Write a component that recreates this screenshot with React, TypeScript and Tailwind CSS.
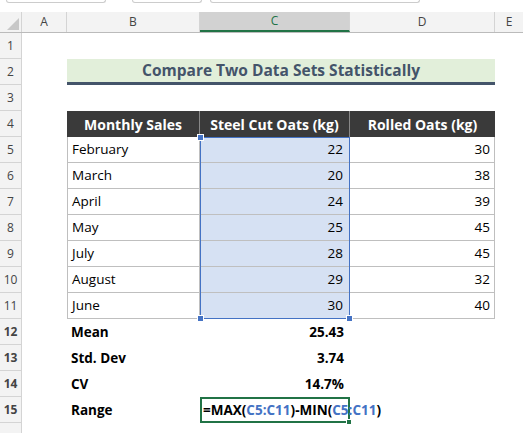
const W = { a: 45 };
const data: [string, number, number][] = [
  ["February", 22, 30],
  ["March", 20, 38],
  ["April", 24, 39],
  ["May", 25, 45],
  ["July", 28, 45],
  ["August", 29, 32],
  ["June", 30, 40],
];
const stats: [string, string][] = [
  ["Mean", "25.43"],
  ["Std. Dev", "3.74"],
  ["CV", "14.7%"],
];

function RowHead({ n }: { n?: number }) {
  return (
    <div className="w-[22px] shrink-0 h-full bg-[#f3f3f3] border-r border-b border-[#d4d4d4] flex items-center justify-center text-[12px] text-[#444]">
      {n}
    </div>
  );
}

export default function App() {
  const rowH = "h-[26px]";
  return (
    <div className="w-[523px] h-[433px] overflow-hidden bg-white text-[13.5px] text-black" style={{ fontFamily: '"Open Sans", sans-serif' }}>
      <div className="h-[12px] flex px-[6px]">
        <div className="w-[100px] h-[3px] border-b border-x border-[#ccc] rounded-b" />
        <div className="w-[70px] h-[3px] border-b border-x border-[#ccc] rounded-b ml-[26px]" />
        <div className="w-[210px] h-[3px] border-b border-x border-[#ccc] rounded-b ml-[8px]" />
      </div>
      <div className="h-[21px] flex bg-[#f3f3f3] border-b border-[#bbb] text-[12px] text-[#444]">
        <div className="w-[22px] border-r border-[#d4d4d4] flex items-end justify-end p-[2px]">
          <div className="w-0 h-0 border-l-[12px] border-l-transparent border-b-[12px] border-b-[#c8c8c8]" />
        </div>
        <div className="w-[45px] border-r border-[#d4d4d4] flex items-center justify-center">A</div>
        <div className="w-[133px] border-r border-[#d4d4d4] flex items-center justify-center">B</div>
        <div className="w-[150px] border-r border-[#d4d4d4] bg-[#d2d2d2] border-b-2 border-b-[#217346] flex items-center justify-center text-[#217346]">C</div>
        <div className="w-[145px] border-r border-[#d4d4d4] flex items-center justify-center">D</div>
        <div className="flex-1 flex items-center justify-center">E</div>
      </div>
      <div className={`flex ${rowH}`}><RowHead n={1} /></div>
      <div className={`flex ${rowH}`}>
        <RowHead n={2} />
        <div style={{ width: W.a }} />
        <div className="w-[428px] bg-[#e2efda] border-b-[3px] border-[#44546a] flex items-center justify-center font-bold text-[15.5px] text-[#44546a]">
          Compare Two Data Sets Statistically
        </div>
      </div>
      <div className={`flex ${rowH}`}><RowHead n={3} /></div>
      <div className={`flex ${rowH} text-[14px]`}>
        <RowHead n={4} />
        <div style={{ width: W.a }} />
        <div className="w-[133px] bg-[#3a3a3a] text-white font-bold flex items-center justify-center border-r border-[#888]">Monthly Sales</div>
        <div className="w-[150px] bg-[#3a3a3a] text-white font-bold flex items-center justify-center border-r border-[#888]">Steel Cut Oats (kg)</div>
        <div className="w-[145px] bg-[#3a3a3a] text-white font-bold flex items-center justify-center">Rolled Oats (kg)</div>
      </div>
      <div className="relative">
        {data.map(([m, s, r], i) => (
          <div key={m} className={`flex ${rowH}`}>
            <RowHead n={5 + i} />
            <div style={{ width: W.a }} />
            <div className="w-[133px] border-l border-b border-r border-[#bfbfbf] flex items-center px-[4px]">{m}</div>
            <div className="w-[150px] bg-[#d6e1f3] border-b border-r border-[#bfbfbf] flex items-center justify-end px-[6px]">{s}</div>
            <div className="w-[145px] border-b border-r border-[#bfbfbf] flex items-center justify-end px-[4px]">{r}</div>
          </div>
        ))}
        <div className="absolute left-[200px] top-0 w-[150px] h-[182px] border-[1.5px] border-[#4472c4] pointer-events-none">
          <div className="absolute -left-[4px] -top-[4px] w-[7px] h-[7px] bg-[#4472c4] border border-white" />
          <div className="absolute -left-[4px] -bottom-[4px] w-[7px] h-[7px] bg-[#4472c4] border border-white" />
          <div className="absolute -right-[4px] -bottom-[4px] w-[7px] h-[7px] bg-[#4472c4] border border-white" />
        </div>
      </div>
      {stats.map(([l, v], i) => (
        <div key={l} className={`flex ${rowH} font-bold`}>
          <RowHead n={12 + i} />
          <div style={{ width: W.a }} />
          <div className="w-[133px] flex items-center px-[4px]">{l}</div>
          <div className="w-[150px] flex items-center justify-end px-[6px]">{v}</div>
        </div>
      ))}
      <div className={`flex ${rowH} font-bold`}>
        <RowHead n={15} />
        <div style={{ width: W.a }} />
        <div className="w-[133px] flex items-center px-[4px]">Range</div>
        <div className="relative w-[150px] border-2 border-[#217346] flex items-center px-[1px] whitespace-nowrap">
          <span>=MAX(<span className="text-[#4472c4]">C5:C11</span>)-MIN(<span className="text-[#4472c4]">C5:C11</span>)</span>
          <div className="absolute -right-[4px] -bottom-[4px] w-[6px] h-[6px] bg-[#217346] border border-white" />
        </div>
      </div>
      <div className="flex h-[20px]"><RowHead /></div>
    </div>
  );
}
